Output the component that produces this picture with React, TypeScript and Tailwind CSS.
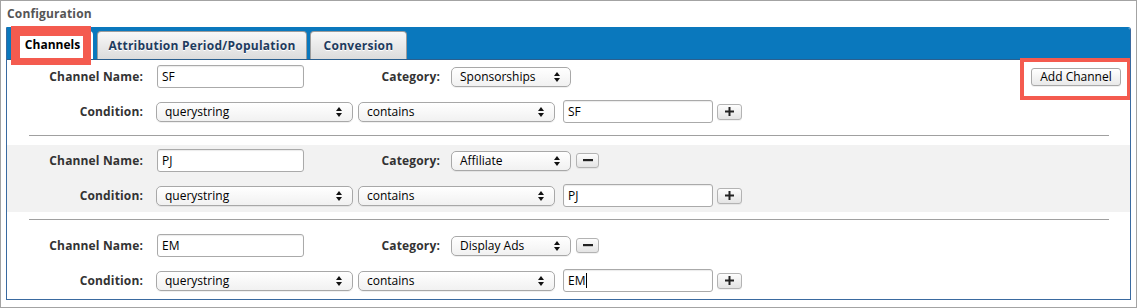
import React from "react";

function Arrows() {
  return (
    <svg className="absolute right-[10px] top-1/2 -translate-y-1/2" width="6" height="10" viewBox="0 0 6 10">
      <polygon points="0,4 3,0 6,4" fill="#111" />
      <polygon points="0,6 3,10 6,6" fill="#111" />
    </svg>
  );
}

function Sel({ className, text }: { className: string; text: string }) {
  return (
    <div
      className={`relative flex h-[20px] items-center rounded-[5px] border border-[#a8a8a8] bg-linear-to-b from-white to-[#f1f1f1] pl-[8px] text-[12px] leading-none text-black shadow-[0_1px_0_rgba(0,0,0,0.06)] ${className}`}
    >
      <span>{text}</span>
      <Arrows />
    </div>
  );
}

function Field({ className, text, cursor }: { className: string; text: string; cursor?: boolean }) {
  return (
    <div
      className={`flex h-[23px] items-center rounded-[3px] border border-[#aaaaaa] bg-white pl-[4px] text-[12px] leading-none text-black shadow-[inset_0_1px_1px_rgba(0,0,0,0.08)] ${className}`}
    >
      <span>{text}</span>
      {cursor && <span className="ml-[1px] h-[15px] w-px bg-black" />}
    </div>
  );
}

function PlusBtn() {
  return (
    <div className="ml-[4px] flex h-[16px] w-[25px] items-center justify-center rounded-[3px] border border-[#b3b3b3] bg-linear-to-b from-[#fdfdfd] to-[#e4e4e4] shadow-[0_1px_0_rgba(0,0,0,0.05)]">
      <svg width="9" height="9" viewBox="0 0 9 9">
        <rect x="3.5" y="0" width="2" height="9" fill="#222" />
        <rect x="0" y="3.5" width="9" height="2" fill="#222" />
      </svg>
    </div>
  );
}

function MinusBtn() {
  return (
    <div className="ml-[5px] flex h-[15px] w-[23px] items-center justify-center rounded-[3px] border border-[#b3b3b3] bg-linear-to-b from-[#fdfdfd] to-[#e4e4e4] shadow-[0_1px_0_rgba(0,0,0,0.05)]">
      <svg width="10" height="3" viewBox="0 0 10 3">
        <rect x="0" y="0" width="10" height="2.2" fill="#222" />
      </svg>
    </div>
  );
}

function Label({ text }: { text: string }) {
  return (
    <div className="w-[136px] text-right text-[12px] font-bold leading-none tracking-[0.15px] text-[#333]">{text}</div>
  );
}

function Channel({
  name,
  category,
  value,
  first,
  cursor,
}: {
  name: string;
  category: string;
  value: string;
  first?: boolean;
  cursor?: boolean;
}) {
  return (
    <div className="flex flex-col gap-[12px]">
      <div className="flex h-[23px] items-center">
        <Label text="Channel Name:" />
        <Field className="ml-[14px] w-[147px]" text={name} />
        <Label text="Category:" />
        <Sel className="ml-[11px] w-[120px]" text={category} />
        {!first && <MinusBtn />}
        {first && (
          <div className="relative ml-auto mr-[9px]">
            <div className="flex h-[18px] w-[90px] items-center justify-center rounded-[3px] border border-[#a9a9a9] bg-linear-to-b from-white to-[#e9e9e9] text-[12px] leading-none text-black shadow-[0_1px_0_rgba(0,0,0,0.06)]">
              Add Channel
            </div>
            <div className="pointer-events-none absolute -bottom-[14px] -left-[11px] -right-[10px] -top-[10px] border-[4px] border-[#f45b4f]" />
          </div>
        )}
      </div>
      <div className="flex h-[23px] items-center">
        <Label text="Condition:" />
        <Sel className="ml-[13px] w-[197px]" text="querystring" />
        <Sel className="ml-[5px] w-[197px]" text="contains" />
        <Field className="ml-[8px] w-[150px]" text={value} cursor={cursor} />
        <PlusBtn />
      </div>
    </div>
  );
}

function Divider() {
  return <div className="ml-[22px] mt-[7px] h-px w-[1080px] bg-[#a0a0a0]" />;
}

export default function App() {
  return (
    <div className="relative h-[308px] w-[1137px] border border-[#a3a3a3] bg-white font-['Open_Sans',sans-serif]">
      <div className="h-[26px] pl-[6px] pt-[5px] text-[12px] font-bold leading-[16px] tracking-[0.15px] text-[#555]">
        Configuration
      </div>
      <div className="ml-[5px] flex h-[273px] w-[1125px] flex-col overflow-hidden rounded-tr-[3px] border border-[#3a6aa0] border-t-[#0a78bd]">
        <div className="flex h-[32px] shrink-0 items-end border-b border-[#2b5f8e] bg-[#0a78bd] pl-[5px]">
          <div className="flex h-[28px] w-[81px] items-center justify-center rounded-t-[4px] bg-white text-[12px] font-bold leading-none text-black">
            Channels
          </div>
          <div className="ml-[4px] flex h-[28px] w-[210px] items-center justify-center rounded-t-[4px] border border-b-0 border-[#9c9c9c] bg-linear-to-b from-[#f8f8f8] to-[#dcdcdc] text-[12px] font-bold leading-none tracking-[0.25px] text-[#1e3b5e] [text-shadow:0_1px_0_#fff]">
            Attribution Period/Population
          </div>
          <div className="ml-[3px] flex h-[28px] w-[97px] items-center justify-center rounded-t-[4px] border border-b-0 border-[#9c9c9c] bg-linear-to-b from-[#f8f8f8] to-[#dcdcdc] text-[12px] font-bold leading-none tracking-[0.25px] text-[#1e3b5e] [text-shadow:0_1px_0_#fff]">
            Conversion
          </div>
        </div>
        <div className="flex-1 bg-white">
          <div className="pb-[5px] pt-[5px]">
            <Channel name="SF" category="Sponsorships" value="SF" first />
          </div>
          <Divider />
          <div className="mt-[9px] bg-[#f2f2f2] pb-[5px] pt-[4px]">
            <Channel name="PJ" category="Affiliate" value="PJ" />
          </div>
          <Divider />
          <div className="mt-[9px] pb-[5px] pt-[5px]">
            <Channel name="EM" category="Display Ads" value="EM" cursor />
          </div>
        </div>
      </div>
      <div className="pointer-events-none absolute left-[10px] top-[25px] h-[39px] w-[80px] border-b-[7px] border-l-[9px] border-r-[8px] border-t-[10px] border-[#f45b4f]" />
    </div>
  );
}
